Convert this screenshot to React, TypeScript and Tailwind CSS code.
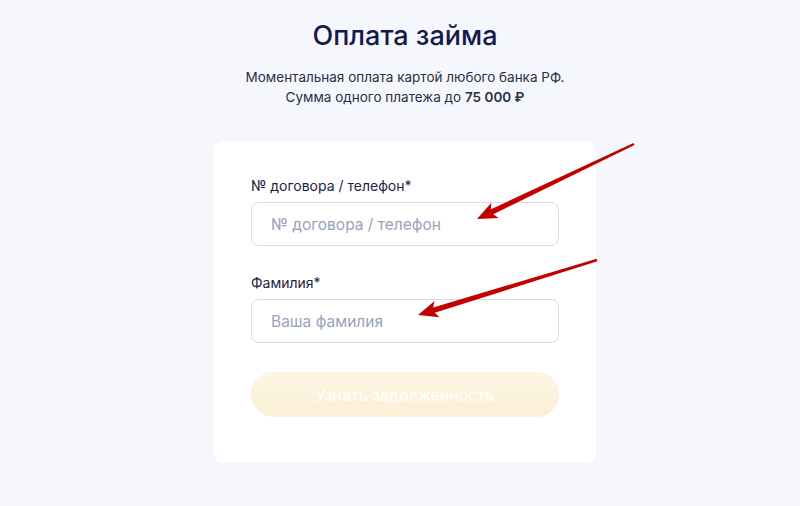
import React from "react";

const Arrow: React.FC<{ x1: number; y1: number; x2: number; y2: number }> = ({ x1, y1, x2, y2 }) => {
  const dx = x2 - x1;
  const dy = y2 - y1;
  const len = Math.hypot(dx, dy);
  const ux = dx / len;
  const uy = dy / len;
  const nx = -uy;
  const ny = ux;
  const head = 17;
  const bx = x2 - head * ux;
  const by = y2 - head * uy;
  const shaft = [
    [x1 + nx * 1.2, y1 + ny * 1.2],
    [bx + 2 * ux + nx * 2.8, by + 2 * uy + ny * 2.8],
    [bx + 2 * ux - nx * 2.8, by + 2 * uy - ny * 2.8],
    [x1 - nx * 1.2, y1 - ny * 1.2],
  ];
  const tip = [
    [x2, y2],
    [bx + nx * 8.5 - ux * 3, by + ny * 8.5 - uy * 3],
    [bx + ux * 2, by + uy * 2],
    [bx - nx * 8.5 - ux * 3, by - ny * 8.5 - uy * 3],
  ];
  const pts = (p: number[][]) => p.map((q) => q.join(",")).join(" ");
  return (
    <g fill="#c20000">
      <polygon points={pts(shaft)} />
      <polygon points={pts(tip)} />
    </g>
  );
};

const Field: React.FC<{ label: string; placeholder: string }> = ({ label, placeholder }) => (
  <div className="flex flex-col">
    <label className="text-[14px] leading-[20px] text-[#1d2340]">{label}</label>
    <input
      type="text"
      placeholder={placeholder}
      className="mt-[6px] h-[44px] w-full rounded-[8px] border border-[#d5dbe8] bg-white px-[19px] text-[15.5px] text-[#1d2340] placeholder:text-[#98a2b8] focus:outline-none"
    />
  </div>
);

export default function App() {
  return (
    <div
      className="relative flex h-[506px] w-full flex-col items-center overflow-hidden bg-[#f5f7fc] pl-[10px] pt-[18px]"
      style={{ fontFamily: "Inter, 'Noto Sans', sans-serif" }}
    >
      <h1 className="text-[27px] font-medium leading-[36px] text-[#141a4a]">Оплата займа</h1>
      <p className="mt-[13px] text-center text-[13.5px] leading-[20px] text-[#2a2f45]">
        Моментальная оплата картой любого банка РФ.
        <br />
        Сумма одного платежа до <span className="font-semibold">75 000 ₽</span>
      </p>

      <div className="mt-[34px] flex w-[382px] flex-col rounded-[10px] bg-white px-[37px] pb-[46px] pt-[35px]">
        <Field label="№ договора / телефон*" placeholder="№ договора / телефон" />
        <div className="mt-[27px]">
          <Field label="Фамилия*" placeholder="Ваша фамилия" />
        </div>
        <button
          type="button"
          className="mt-[29px] h-[45px] w-full rounded-full border border-[#fbf1d8] bg-gradient-to-b from-[#fdf6e4] to-[#fbf0d6] text-[16px] text-white"
        >
          Узнать задолженность
        </button>
      </div>

      <svg className="pointer-events-none absolute left-0 top-0" width="800" height="506">
        <Arrow x1={634} y1={144} x2={477} y2={219} />
        <Arrow x1={597} y1={260} x2={418} y2={315} />
      </svg>
    </div>
  );
}
